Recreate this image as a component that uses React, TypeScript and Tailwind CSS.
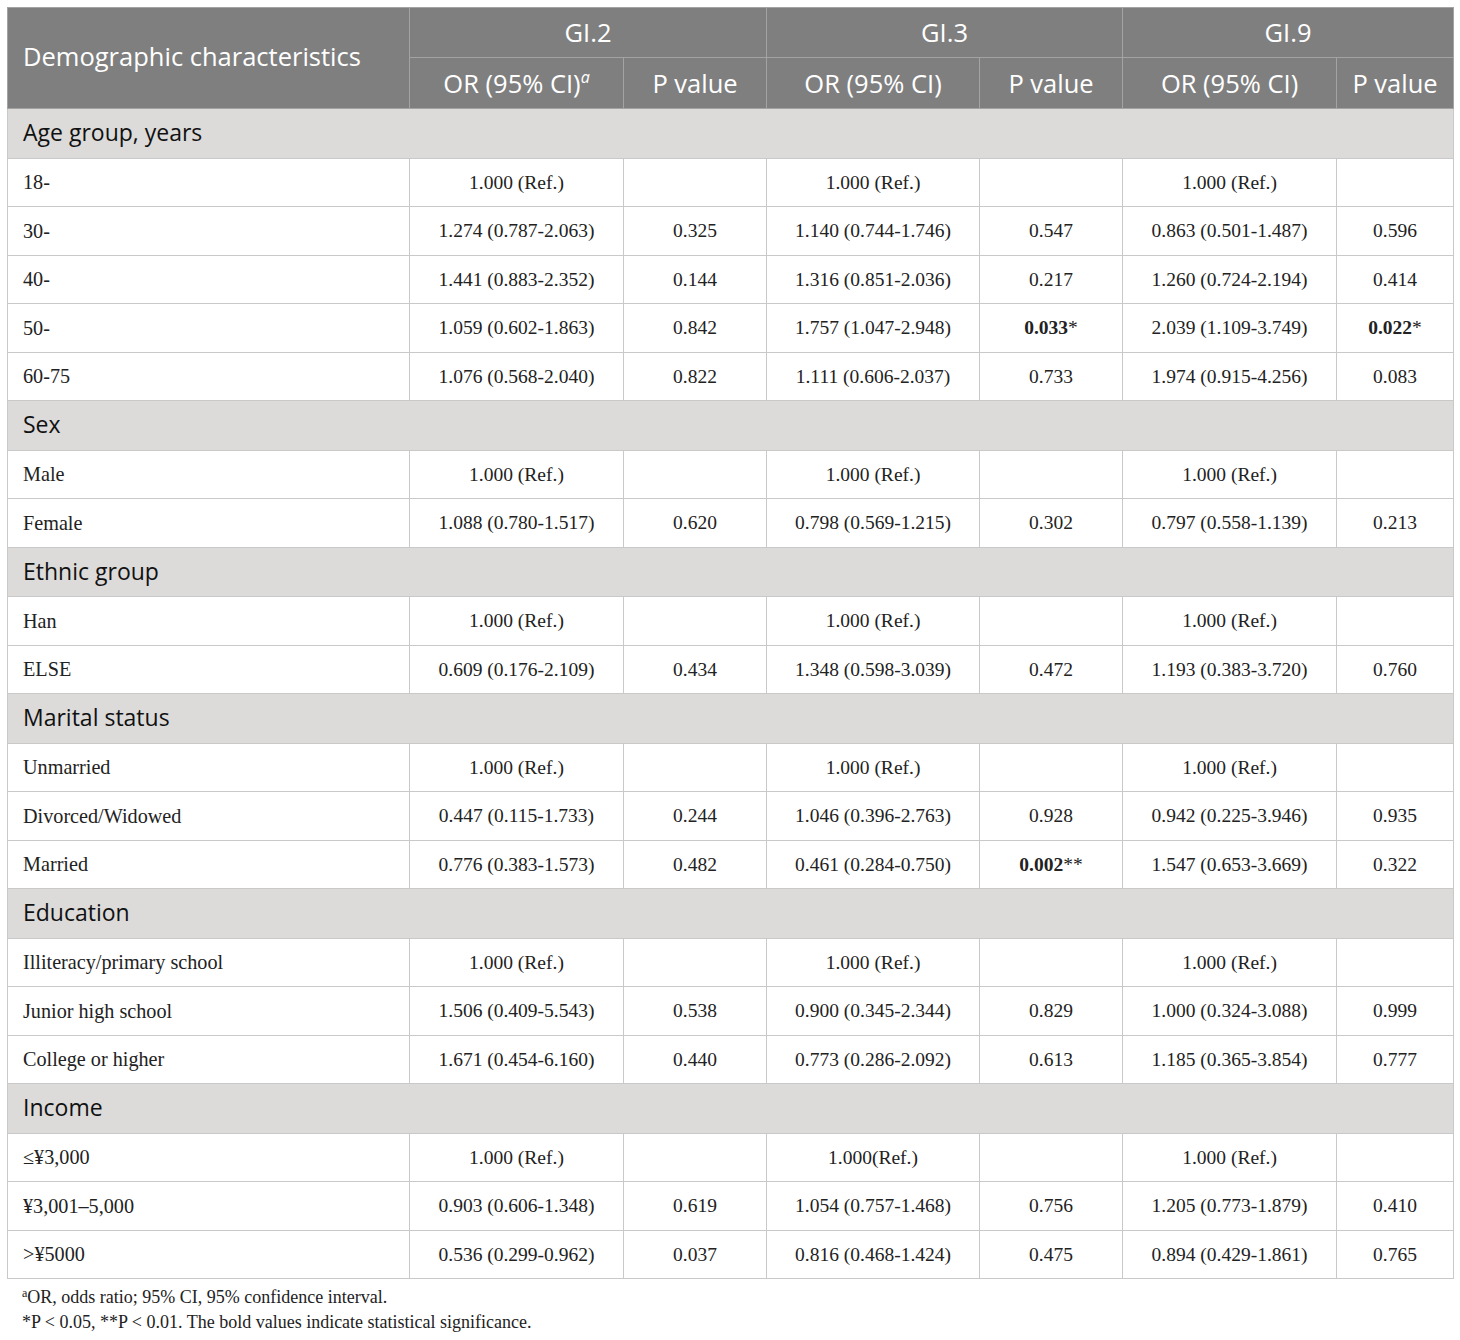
import React from "react";

type Cell = React.ReactNode;
type Row = { cat?: string; label?: string; v?: Cell[] };

const B = ({ v, s }: { v: string; s: string }) => (
  <span>
    <b className="font-bold">{v}</b>
    {s}
  </span>
);

const rows: Row[] = [
  { cat: "Age group, years" },
  { label: "18-", v: ["1.000 (Ref.)", "", "1.000 (Ref.)", "", "1.000 (Ref.)", ""] },
  { label: "30-", v: ["1.274 (0.787-2.063)", "0.325", "1.140 (0.744-1.746)", "0.547", "0.863 (0.501-1.487)", "0.596"] },
  { label: "40-", v: ["1.441 (0.883-2.352)", "0.144", "1.316 (0.851-2.036)", "0.217", "1.260 (0.724-2.194)", "0.414"] },
  { label: "50-", v: ["1.059 (0.602-1.863)", "0.842", "1.757 (1.047-2.948)", <B v="0.033" s="*" />, "2.039 (1.109-3.749)", <B v="0.022" s="*" />] },
  { label: "60-75", v: ["1.076 (0.568-2.040)", "0.822", "1.111 (0.606-2.037)", "0.733", "1.974 (0.915-4.256)", "0.083"] },
  { cat: "Sex" },
  { label: "Male", v: ["1.000 (Ref.)", "", "1.000 (Ref.)", "", "1.000 (Ref.)", ""] },
  { label: "Female", v: ["1.088 (0.780-1.517)", "0.620", "0.798 (0.569-1.215)", "0.302", "0.797 (0.558-1.139)", "0.213"] },
  { cat: "Ethnic group" },
  { label: "Han", v: ["1.000 (Ref.)", "", "1.000 (Ref.)", "", "1.000 (Ref.)", ""] },
  { label: "ELSE", v: ["0.609 (0.176-2.109)", "0.434", "1.348 (0.598-3.039)", "0.472", "1.193 (0.383-3.720)", "0.760"] },
  { cat: "Marital status" },
  { label: "Unmarried", v: ["1.000 (Ref.)", "", "1.000 (Ref.)", "", "1.000 (Ref.)", ""] },
  { label: "Divorced/Widowed", v: ["0.447 (0.115-1.733)", "0.244", "1.046 (0.396-2.763)", "0.928", "0.942 (0.225-3.946)", "0.935"] },
  { label: "Married", v: ["0.776 (0.383-1.573)", "0.482", "0.461 (0.284-0.750)", <B v="0.002" s="**" />, "1.547 (0.653-3.669)", "0.322"] },
  { cat: "Education" },
  { label: "Illiteracy/primary school", v: ["1.000 (Ref.)", "", "1.000 (Ref.)", "", "1.000 (Ref.)", ""] },
  { label: "Junior high school", v: ["1.506 (0.409-5.543)", "0.538", "0.900 (0.345-2.344)", "0.829", "1.000 (0.324-3.088)", "0.999"] },
  { label: "College or higher", v: ["1.671 (0.454-6.160)", "0.440", "0.773 (0.286-2.092)", "0.613", "1.185 (0.365-3.854)", "0.777"] },
  { cat: "Income" },
  { label: "≤¥3,000", v: ["1.000 (Ref.)", "", "1.000(Ref.)", "", "1.000 (Ref.)", ""] },
  { label: "¥3,001–5,000", v: ["0.903 (0.606-1.348)", "0.619", "1.054 (0.757-1.468)", "0.756", "1.205 (0.773-1.879)", "0.410"] },
  { label: ">¥5000", v: ["0.536 (0.299-0.962)", "0.037", "0.816 (0.468-1.424)", "0.475", "0.894 (0.429-1.861)", "0.765"] },
];

const sans = "font-['Open_Sans','Noto_Sans',sans-serif]";
const serif = "font-['Liberation_Serif','Times_New_Roman',serif]";

export default function App() {
  return (
    <div className="w-[1460px] h-[1340px] bg-white pt-[7px] pl-[7px]">
      <table className="table-fixed border-collapse w-[1446px] border border-[#c9c9c9]">
        <colgroup>
          <col className="w-[402px]" />
          <col className="w-[214px]" />
          <col className="w-[143px]" />
          <col className="w-[213px]" />
          <col className="w-[143px]" />
          <col className="w-[214px]" />
          <col className="w-[117px]" />
        </colgroup>
        <thead className={`${sans} text-white bg-[#7f7f7f]`}>
          <tr className="h-[50px]">
            <th rowSpan={2} className="text-left font-normal pl-[15px] text-[25.5px] border border-[#a3a3a3] pb-[3px]">
              Demographic characteristics
            </th>
            <th colSpan={2} className="font-normal text-[25.5px] border border-[#a3a3a3]">GI.2</th>
            <th colSpan={2} className="font-normal text-[25.5px] border border-[#a3a3a3]">GI.3</th>
            <th colSpan={2} className="font-normal text-[25.5px] border border-[#a3a3a3]">GI.9</th>
          </tr>
          <tr className="h-[51px]">
            <th className="font-normal text-[25.5px] border border-[#a3a3a3]">
              OR (95% CI)<sup className="italic text-[16px] relative -top-[10px]">a</sup>
            </th>
            <th className="font-normal text-[25.5px] border border-[#a3a3a3]">P value</th>
            <th className="font-normal text-[25.5px] border border-[#a3a3a3]">OR (95% CI)</th>
            <th className="font-normal text-[25.5px] border border-[#a3a3a3]">P value</th>
            <th className="font-normal text-[25.5px] border border-[#a3a3a3]">OR (95% CI)</th>
            <th className="font-normal text-[25.5px] border border-[#a3a3a3]">P value</th>
          </tr>
        </thead>
        <tbody>
          {rows.map((r, i) =>
            r.cat ? (
              <tr key={i} className="h-[49.5px] bg-[#dcdbda]">
                <td colSpan={7} className={`${sans} text-[23px] text-[#111] pl-[15px] pb-[2px] border border-[#c9c9c9]`}>
                  {r.cat}
                </td>
              </tr>
            ) : (
              <tr key={i} className={`h-[48.5px] ${serif} text-[19.5px] text-[#222]`}>
                <td className="pl-[15px] text-[20.2px] border border-[#c9c9c9]">{r.label}</td>
                {r.v!.map((c, j) => (
                  <td key={j} className="text-center border border-[#c9c9c9]">
                    {c}
                  </td>
                ))}
              </tr>
            )
          )}
        </tbody>
      </table>
      <div className={`${serif} text-[18px] text-[#222] pl-[15px] mt-[6px] leading-[25px]`}>
        <div>
          <sup className="text-[12px] relative -top-[6px]">a</sup>OR, odds ratio; 95% CI, 95% confidence interval.
        </div>
        <div>*P &lt; 0.05, **P &lt; 0.01. The bold values indicate statistical significance.</div>
      </div>
    </div>
  );
}
